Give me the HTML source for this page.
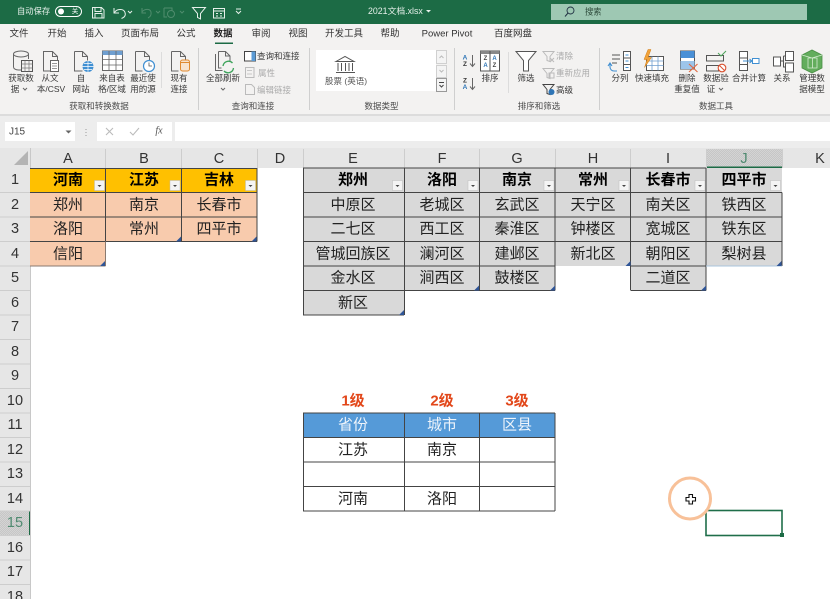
<!DOCTYPE html>
<html><head><meta charset="utf-8"><style>
html,body{margin:0;padding:0;background:#fff;width:830px;height:599px;overflow:hidden}
svg{display:block}
text{font-family:"Liberation Sans","Noto Sans CJK SC",sans-serif;dominant-baseline:central}
.m{text-anchor:middle}
.t{font-size:9.5px;fill:#333}
.r{font-size:8.5px;fill:#3a3a3a}
.g{font-size:8.5px;fill:#aaa}
.gl{font-size:8.5px;fill:#4a4a4a;text-anchor:middle}
.h{font-size:14.5px;fill:#333;text-anchor:middle}
.c{font-size:15px;fill:#222;text-anchor:middle}
.b{font-size:15px;fill:#000;text-anchor:middle;font-weight:700}
.o{font-size:15px;fill:#e2471a;text-anchor:middle;font-weight:700}
.w{font-size:15px;fill:#eef4fb;text-anchor:middle}
.l{stroke:#444;stroke-width:1;fill:none}
.s{stroke:#666;stroke-width:1;fill:none}
.sq{stroke:#d4d4d4;stroke-width:1}
.fb{fill:#f4f4f4;stroke:#bbb;stroke-width:.5}
.tri{fill:#2f5597}
</style></head><body>
<svg width="830" height="599" viewBox="0 0 830 599" xmlns="http://www.w3.org/2000/svg">
<defs>
<pattern id="hat" width="2" height="2" patternUnits="userSpaceOnUse"><rect width="2" height="2" fill="#c6c6c6"/><rect width="1" height="1" fill="#d4d4d4"/><rect x="1" y="1" width="1" height="1" fill="#d4d4d4"/></pattern>
</defs>
<rect width="830" height="599" fill="#fff"/>
<!-- title bar -->
<rect width="830" height="24" fill="#1c6b45"/>
<text x="17" y="11" style="font-size:8.3px;fill:#e6f0ea">自动保存</text>
<rect x="55.500" y="6.500" width="26" height="10" rx="5" fill="none" stroke="#fff"/>
<circle cx="61" cy="11.500" r="3" fill="#fff"/>
<text x="75" y="11.500" class="m" style="font-size:6.500px;fill:#fff">关</text>
<g fill="none" stroke="#e6f0ea" stroke-width="1">
<path d="M92.500 7.500h9l2.500 2.500v8h-11.500z M95 7.500v4h6v-4 M95 18v-4.500h7V18"/>
<path d="M114 8v5h5 M114.500 12.500c2-3.500 9-4.500 10.500 0 1 3-1 5-3.500 6"/>
<path d="M128 11l2 2 2-2" />
<path d="M142 8v5h4 M142 12c2-3 8-4 9 0 .5 3-1 5-3 6" stroke="#4f8c6d"/>
<path d="M156 11l2 2 2-2" stroke="#4f8c6d"/>
<path d="M164 8h8v3 M164 8v9h3" stroke="#4f8c6d"/><circle cx="171" cy="14" r="3.500" stroke="#4f8c6d"/>
<path d="M180 11l2 2 2-2" stroke="#4f8c6d"/>
<path d="M192.500 7.500h13l-5 6v5.500l-3-1.500v-4z"/>
<rect x="213.500" y="8.500" width="11" height="9.500"/><path d="M213.500 11h11 M216 13.500h2 M220 13.500h2 M216 16h2 M220 16h2"/>
<path d="M236 9h5 M236 11l2.500 2.500 2.500-2.500"/>
</g>
<text x="368" y="11" style="font-size:8.800px;fill:#e6f0ea">2021文档.xlsx</text>
<path d="M426 10h5l-2.500 2.500z" fill="#e6f0ea"/>
<rect x="551" y="4" width="256" height="16" fill="#9ec8b3"/>
<circle cx="570.500" cy="10.500" r="3.500" fill="none" stroke="#234" stroke-width=".9"/><path d="M568 13l-3 3.500" stroke="#234" stroke-width="1"/>
<text x="585" y="11.500" style="font-size:8.300px;fill:#2d4a3b">搜索</text>
<!-- ribbon -->
<rect y="24" width="830" height="90" fill="#f3f2f1"/>
<text x="19" y="34" class="t m">文件</text><text x="57" y="34" class="t m">开始</text><text x="94" y="34" class="t m">插入</text><text x="140" y="34" class="t m">页面布局</text><text x="186" y="34" class="t m">公式</text>
<text x="223" y="34" class="t m" style="font-weight:700;fill:#222">数据</text><rect x="215" y="42.500" width="18" height="1.500" fill="#1c6b45"/>
<text x="261" y="34" class="t m">审阅</text><text x="298" y="34" class="t m">视图</text><text x="344" y="34" class="t m">开发工具</text><text x="390" y="34" class="t m">帮助</text><text x="447" y="34" class="t m">Power Pivot</text><text x="513" y="34" class="t m">百度网盘</text>
<!-- separators -->
<g class="sq">
<path d="M198.500 48v62 M309.500 48v62 M454.500 48v62 M599.500 48v62" stroke="#cfcfcf"/>
<path d="M161.500 52v36 M508.500 52v41" stroke="#dcdcdc"/>
</g>
<!-- group 1 icons -->
<g class="s">
<path d="M13.500 54v13c0 1.500 2 3 5 3h3 M28.500 54v5"/><ellipse cx="21" cy="54" rx="7.500" ry="3"/>
<path d="M43.500 51.500h9l5 5v14.500h-14z M52.500 51.500v5h5"/>
<path d="M74.500 51.500h8l5 5v4 M82.500 51.500v5h5 M74.500 51.500v19.500h8"/>
<path d="M135.500 51.500h9l5 5v4 M144.500 51.500v5h5 M135.500 51.500v19.500h7"/>
<path d="M171.500 51.500h9l5 5v3 M180.500 51.500v5h5 M171.500 51.500v19.500h7"/>
</g>
<rect x="21.500" y="60.500" width="11" height="11" fill="#f3f2f1" stroke="#555"/><path d="M21.500 64h11 M21.500 68h11 M25 60.500v11 M29 60.500v11" stroke="#777" stroke-width=".7"/>
<rect x="50.500" y="60.500" width="8" height="11" fill="#fff" stroke="#666"/><path d="M52 63.500h5 M52 66h5 M52 68.500h5" stroke="#777" stroke-width=".7"/>
<circle cx="88" cy="66.500" r="5.500" fill="#3f8fd2"/><path d="M82.500 66.500h11 M88 61v11 M84 63.500h8 M84 69.500h8" stroke="#fff" stroke-width=".7"/>
<rect x="102.500" y="51" width="20" height="19.500" fill="#fff" stroke="#666"/><rect x="102.500" y="51" width="20" height="4" fill="#6f9fd0"/><path d="M102.500 59.500h20 M102.500 65h20 M109 51v19.500 M116 51v19.500" stroke="#666" stroke-width=".8" fill="none"/>
<circle cx="149" cy="66" r="5.500" fill="#fff" stroke="#3f8fd2" stroke-width="1.200"/><path d="M149 62.500v3.500h3" stroke="#555" fill="none" stroke-width=".8"/>
<rect x="180.500" y="60" width="9" height="11" rx="2" fill="#f7e3cf" stroke="#e08a30"/><path d="M180.500 62.500h9" stroke="#e08a30"/>
<!-- labels 1 -->
<text x="21" y="78" class="r m">获取数</text><text x="15" y="89" class="r m">据</text><path d="M23 88l2 2 2-2" class="s"/>
<text x="50" y="78" class="r m">从文</text><text x="51" y="89" class="r m">本/CSV</text>
<text x="81" y="78" class="r m">自</text><text x="81" y="89" class="r m">网站</text>
<text x="112" y="78" class="r m">来自表</text><text x="112" y="89" class="r m">格/区域</text>
<text x="143" y="78" class="r m">最近使</text><text x="143" y="89" class="r m">用的源</text>
<text x="179" y="78" class="r m">现有</text><text x="179" y="89" class="r m">连接</text>
<text x="99" y="106" class="gl">获取和转换数据</text>
<!-- group 2 -->
<path d="M215.500 54v16.500h7 M218.500 51.500h7l4.500 4.500v5 M225.500 51.500v4.500h4.500 M218.500 51.500v16.500h3" class="s"/>
<path d="M223 66a5.500 5.500 0 0 1 9.500-3 M233.500 68a5.500 5.500 0 0 1-9.500 3" fill="none" stroke="#3ca35a" stroke-width="1.300"/>
<text x="223" y="78" class="r m">全部刷新</text><path d="M221 88l2 2 2-2" class="s"/>
<rect x="244.500" y="51.500" width="11" height="9.500" fill="#fff" stroke="#444"/><rect x="251.500" y="51.500" width="4" height="9.500" fill="#5b9bd5"/>
<text x="257" y="56" class="r">查询和连接</text>
<rect x="245.500" y="67.500" width="8.500" height="10" fill="none" stroke="#bbb"/><path d="M247 70.500h5 M247 74h5" stroke="#bbb" stroke-width=".7"/>
<text x="258" y="73" class="g">属性</text>
<path d="M245.500 84.500h6l3 3v7h-9z" fill="none" stroke="#bbb"/>
<text x="257" y="90" class="g">编辑链接</text>
<text x="253" y="106" class="gl">查询和连接</text>
<!-- data types -->
<rect x="316" y="50" width="120" height="41" fill="#fff"/>
<rect x="436.500" y="50.500" width="10" height="13" fill="#f4f4f4" stroke="#d0d0d0"/>
<rect x="436.500" y="65.500" width="10" height="12" fill="#f4f4f4" stroke="#d0d0d0"/>
<rect x="436.500" y="78.500" width="10" height="13" fill="#f4f4f4" stroke="#999"/>
<path d="M439.500 58l2-2 2 2 M439.500 70l2 2 2-2" stroke="#bbb" fill="none"/><path d="M439 82.500h5 M439.500 85l2 2 2-2" stroke="#444" fill="none"/>
<path d="M336 61.500l9-5 9 5z M336 72.500h19 M338 63v8 M341.500 63v8 M345.500 63v8 M349 63v8 M352.500 63v8" fill="none" stroke="#555" stroke-width="1"/>
<text x="325" y="81" style="font-size:8.500px;fill:#555">股票 (英语)</text>
<text x="381.500" y="106" class="gl">数据类型</text>
<!-- sort -->
<text x="465" y="58" style="font-size:6.500px;font-weight:700;fill:#2e75b6" class="m">A</text><text x="465" y="64.500" style="font-size:6.500px;font-weight:700;fill:#333" class="m">Z</text>
<text x="465" y="81" style="font-size:6.500px;font-weight:700;fill:#333" class="m">Z</text><text x="465" y="87.500" style="font-size:6.500px;font-weight:700;fill:#2e75b6" class="m">A</text>
<path d="M472.500 55v11 M470 63.500l2.500 3 2.500-3 M472.500 78v11 M470 86.500l2.500 3 2.500-3" class="s"/>
<rect x="480.500" y="51" width="19" height="20" fill="#fff" stroke="#555"/><rect x="480.500" y="51" width="19" height="3" fill="#888"/><path d="M490 51v20" stroke="#555"/>
<text x="485.500" y="59" style="font-size:6px;font-weight:700;fill:#444" class="m">Z</text><text x="485.500" y="66" style="font-size:6px;font-weight:700;fill:#2e75b6" class="m">A</text>
<text x="494.500" y="59" style="font-size:6px;font-weight:700;fill:#2e75b6" class="m">A</text><text x="494.500" y="66" style="font-size:6px;font-weight:700;fill:#444" class="m">Z</text>
<text x="490" y="78" class="r m">排序</text>
<path d="M516 51.500h20l-7.500 9v10.500h-5v-10.500z" fill="#fff" stroke="#555"/>
<text x="526" y="78" class="r m">筛选</text>
<path d="M543 51.500h11l-4 5v5l-3-1v-4z" fill="none" stroke="#bbb"/><path d="M550 58l4 4 M554 58l-4 4" stroke="#bbb"/>
<text x="556" y="56" class="g">清除</text>
<path d="M543 68.500h11l-4 5v5l-3-1v-4z" fill="none" stroke="#bbb"/><rect x="549" y="73" width="5" height="5" fill="none" stroke="#bbb"/>
<text x="556" y="73" class="g">重新应用</text>
<path d="M543 84.500h11l-4 5v5l-3-1v-4z" fill="none" stroke="#444"/><circle cx="551.500" cy="92" r="3" fill="#2e75b6"/>
<text x="556" y="90" class="r">高级</text>
<text x="539" y="106" class="gl">排序和筛选</text>
<!-- data tools -->
<path d="M612 55h8 M612 59h8 M612 63h5" stroke="#555" fill="none"/><path d="M610 63v4a4 4 0 0 0 4 4h3 M608 66l2-3 2 3" stroke="#3f8fd2" fill="none" stroke-width="1.100"/>
<rect x="623.500" y="51.500" width="7" height="19" fill="#fff" stroke="#555"/><path d="M623.500 58h7 M623.500 64.500h7" stroke="#555"/><path d="M625.500 55h3 M625.500 61h3 M625.500 67.500h3" stroke="#3f8fd2"/>
<rect x="646.500" y="56.500" width="17" height="14" fill="#fff" stroke="#555"/><path d="M646.500 61h17 M646.500 65.500h17 M652 56.500v14 M658 56.500v14" stroke="#6f9fd0" stroke-width=".8"/>
<path d="M648 49.500l-4 10h3l-2.500 8 7-10h-3.500l3-8z" fill="#f2a33a" stroke="#d07f1a" stroke-width=".5"/>
<rect x="680.500" y="51" width="14" height="18" fill="#fff" stroke="#555"/><rect x="680.500" y="51" width="14" height="7" fill="#4a90d6"/><rect x="680.500" y="61" width="14" height="8" fill="#9dc5ea"/>
<path d="M689 64l8.500 8 M697.500 64l-8.500 8" stroke="#e2673f" stroke-width="1.100"/>
<rect x="706.500" y="55.500" width="17" height="5.500" fill="none" stroke="#555"/><rect x="706.500" y="65.500" width="12" height="5.500" fill="none" stroke="#555"/>
<path d="M718 53l3 3 5-5" stroke="#4ca35a" fill="none"/>
<circle cx="722" cy="68" r="3.800" fill="#fff" stroke="#d9502e" stroke-width="1.100"/><path d="M719.500 65.500l5 5" stroke="#d9502e"/>
<rect x="739.500" y="51.500" width="8" height="19" fill="#fff" stroke="#555"/><path d="M739.500 58h8 M739.500 64.500h8" stroke="#555"/>
<path d="M743 61h9 M749.500 59l2.500 2-2.500 2" stroke="#3f8fd2" fill="none"/><rect x="752.500" y="58.500" width="6.500" height="5" fill="#fff" stroke="#3f8fd2"/>
<rect x="773.500" y="57" width="7" height="9" fill="#fff" stroke="#555"/><rect x="785.500" y="51.500" width="8" height="9" fill="#fff" stroke="#555"/><rect x="785.500" y="63" width="8" height="9" fill="#fff" stroke="#555"/><path d="M780.500 61h3 M783.500 56v11h2 M783.500 56h2" stroke="#555" fill="none"/>
<path d="M802 55l10-5 10 5v13l-10 5-10-5z" fill="#63ad5d" stroke="#4a8f46" stroke-width=".8"/><path d="M808 58h9v10h-9z M812.500 58v10 M802 55l10 3 10-3" stroke="#d6ecd2" fill="none" stroke-width=".8"/>
<text x="620" y="78" class="r m">分列</text><text x="652" y="78" class="r m">快速填充</text>
<text x="687" y="78" class="r m">删除</text><text x="687" y="89" class="r m">重复值</text>
<text x="716" y="78" class="r m">数据验</text><text x="711" y="89" class="r m">证</text><path d="M719 88l2 2 2-2" class="s"/>
<text x="749" y="78" class="r m">合并计算</text><text x="782" y="78" class="r m">关系</text>
<text x="812" y="78" class="r m">管理数</text><text x="812" y="89" class="r m">据模型</text>
<text x="716" y="106" class="gl">数据工具</text>
<!-- formula band -->
<rect y="114" width="830" height="34" fill="#ededed"/>
<rect y="114" width="830" height="2" fill="#dcdcdc"/>
<rect x="5" y="122" width="70" height="19" fill="#fff"/>
<text x="9" y="132" style="font-size:10px;fill:#444">J15</text>
<path d="M65.500 130.500h6l-3 3z" fill="#666"/>
<path d="M86 129v1 M86 132v1 M86 135v1" stroke="#999"/>
<rect x="97" y="122" width="75" height="19" fill="#fff"/>
<path d="M106 128l7 7 M113 128l-7 7" stroke="#bbb" stroke-width="1.100"/>
<path d="M130 132l3 3 6-7" stroke="#bbb" stroke-width="1.100" fill="none"/>
<text x="159" y="131" class="m" style="font-size:10px;font-style:italic;fill:#555;font-family:'Liberation Serif',serif">fx</text>
<rect x="175" y="122" width="655" height="19" fill="#fff"/>
<!-- headers -->
<rect y="148" width="830" height="20" fill="#e6e6e6"/>
<rect y="148" width="30" height="451" fill="#e6e6e6"/>
<path d="M14 165h14v-14z" fill="#b4b4b4"/>
<rect x="706" y="149" width="76" height="18" fill="url(#hat)"/>
<rect x="706" y="166.500" width="76" height="1.500" fill="#1c6b45"/>
<rect y="511" width="30" height="24.500" fill="url(#hat)"/>
<rect x="29" y="511" width="1.500" height="24.500" fill="#1c6b45"/>
<g stroke="#cdcdcd" stroke-width="1">
<path d="M30.500 149v19 M105.500 149v19 M181.500 149v19 M257.500 149v19 M303.500 149v19 M404.500 149v19 M479.500 149v19 M555.500 149v19 M630.500 149v19 M706.500 149v19 M782.500 149v19"/>
<path d="M30.500 148v451" stroke="#c8c8c8"/>
<path d="M0 192.500h30 M0 217h30 M0 241.500h30 M0 266h30 M0 290.500h30 M0 315h30 M0 339.500h30 M0 364h30 M0 388.500h30 M0 413h30 M0 437.500h30 M0 462h30 M0 486.500h30 M0 511h30 M0 535.500h30 M0 560h30 M0 584.500h30"/>
</g>
<g class="h">
<text x="68" y="159">A</text><text x="144" y="159">B</text><text x="219" y="159">C</text><text x="280" y="159">D</text><text x="353" y="159">E</text><text x="442" y="159">F</text><text x="517" y="159">G</text><text x="593" y="159">H</text><text x="668" y="159">I</text><text x="744" y="159" style="fill:#4f8a70">J</text><text x="820" y="159">K</text>
<text x="15" y="180">1</text><text x="15" y="205">2</text><text x="15" y="229">3</text><text x="15" y="254">4</text><text x="15" y="278">5</text><text x="15" y="303">6</text><text x="15" y="327">7</text><text x="15" y="352">8</text><text x="15" y="376">9</text><text x="15" y="401">10</text><text x="15" y="425">11</text><text x="15" y="450">12</text><text x="15" y="474">13</text><text x="15" y="499">14</text><text x="15" y="523" style="fill:#4f8a70">15</text><text x="15" y="548">16</text><text x="15" y="572">17</text><text x="15" y="597">18</text>
</g>
<!-- table 1 fills -->
<rect x="30" y="168" width="227" height="24.500" fill="#ffc000"/>
<rect x="30" y="192.500" width="227" height="49" fill="#f8cbad"/>
<rect x="30" y="241.500" width="75.500" height="24.500" fill="#f8cbad"/>
<path class="l" d="M30 168.500h227 M30 192.500h227 M30 217h227 M30 241.500h227 M105.500 168v73.500 M181.500 168v73.500 M257 168v73.500"/>
<path d="M105.500 241.500v24.500 M30 266h75.500" stroke="#8a7a70" fill="none"/>
<text x="68" y="180" class="b">河南</text><text x="144" y="180" class="b">江苏</text><text x="219" y="180" class="b">吉林</text>
<text x="68" y="205" class="c">郑州</text><text x="144" y="205" class="c">南京</text><text x="219" y="205" class="c">长春市</text>
<text x="68" y="229" class="c">洛阳</text><text x="144" y="229" class="c">常州</text><text x="219" y="229" class="c">四平市</text>
<text x="68" y="254" class="c">信阳</text>
<!-- table 2 fills -->
<rect x="303" y="168" width="479" height="98" fill="#d9d9d9"/>
<rect x="303" y="266" width="252" height="24.500" fill="#d9d9d9"/>
<rect x="631" y="266" width="75" height="24.500" fill="#d9d9d9"/>
<rect x="303" y="290.500" width="101" height="24.500" fill="#d9d9d9"/>
<path class="l" d="M303 168h403 M303 192.500h479 M303 217h479 M303 241.500h479 M303 266h252 M631 266h75 M303 290.500h252 M631 290.500h75 M303 315h101 M303.500 168v147 M404.500 168v147 M479.500 168v122.500 M555 168v122.500 M630.500 168v122.500 M706 168v122.500 M782 192.500v73.500"/>
<path d="M706 266h76" stroke="#a9c4dc" fill="none"/>
<g>
<text x="353" y="180" class="b">郑州</text><text x="442" y="180" class="b">洛阳</text><text x="517" y="180" class="b">南京</text><text x="593" y="180" class="b">常州</text><text x="668" y="180" class="b">长春市</text><text x="744" y="180" class="b">四平市</text>
<text x="353" y="205" class="c">中原区</text><text x="442" y="205" class="c">老城区</text><text x="517" y="205" class="c">玄武区</text><text x="593" y="205" class="c">天宁区</text><text x="668" y="205" class="c">南关区</text><text x="744" y="205" class="c">铁西区</text>
<text x="353" y="229" class="c">二七区</text><text x="442" y="229" class="c">西工区</text><text x="517" y="229" class="c">秦淮区</text><text x="593" y="229" class="c">钟楼区</text><text x="668" y="229" class="c">宽城区</text><text x="744" y="229" class="c">铁东区</text>
<text x="353" y="254" class="c">管城回族区</text><text x="442" y="254" class="c">澜河区</text><text x="517" y="254" class="c">建邺区</text><text x="593" y="254" class="c">新北区</text><text x="668" y="254" class="c">朝阳区</text><text x="744" y="254" class="c">梨树县</text>
<text x="353" y="278" class="c">金水区</text><text x="442" y="278" class="c">涧西区</text><text x="517" y="278" class="c">鼓楼区</text><text x="668" y="278" class="c">二道区</text>
<text x="353" y="303" class="c">新区</text>
</g>
<!-- filter buttons -->
<g>
<rect class="fb" x="94.500" y="180.500" width="10" height="10"/><rect class="fb" x="170" y="180.500" width="10" height="10"/><rect class="fb" x="245.500" y="180.500" width="10" height="10"/>
<rect class="fb" x="392.500" y="180.500" width="10" height="10"/><rect class="fb" x="468" y="180.500" width="10" height="10"/><rect class="fb" x="544" y="180.500" width="10" height="10"/><rect class="fb" x="619" y="180.500" width="10" height="10"/><rect class="fb" x="695" y="180.500" width="10" height="10"/><rect class="fb" x="770.500" y="180.500" width="10" height="10"/>
</g>
<g fill="#444">
<path d="M97.500 185h4l-2 2z M173 185h4l-2 2z M248.500 185h4l-2 2z M395.500 185h4l-2 2z M471 185h4l-2 2z M547 185h4l-2 2z M622 185h4l-2 2z M698 185h4l-2 2z M773.500 185h4l-2 2z"/>
</g>
<!-- corner triangles -->
<g class="tri">
<path d="M105 261v5h-5z M181 236.500v5h-5z M256.500 236.500v5h-5z M404 310v5h-5z M479 285.500v5h-5z M555 285.500v5h-5z M630.500 261v5h-5z M706 285.500v5h-5z M781.500 261v5h-5z"/>
</g>
<!-- level table -->
<text x="353" y="401" class="o">1级</text><text x="442" y="401" class="o">2级</text><text x="517" y="401" class="o">3级</text>
<rect x="303" y="413" width="252" height="24.500" fill="#559ad8"/>
<path class="l" d="M303 413h252 M303 437.500h252 M303 462h252 M303 486.500h252 M303 511h252 M303.500 413v98 M404.500 413v98 M479.500 413v98 M555 413v98"/>
<text x="353" y="425" class="w">省份</text><text x="442" y="425" class="w">城市</text><text x="517" y="425" class="w">区县</text>
<text x="353" y="450" class="c">江苏</text><text x="442" y="450" class="c">南京</text>
<text x="353" y="499" class="c">河南</text><text x="442" y="499" class="c">洛阳</text>
<!-- selection + cursor -->
<rect x="706" y="510.500" width="76" height="25" fill="none" stroke="#1f6e4a" stroke-width="1.600"/>
<rect x="780" y="533" width="4" height="4" fill="#1c6b45"/>
<circle cx="690" cy="498.500" r="20.500" fill="none" stroke="#f8c199" stroke-width="3"/>
<path d="M689 494.500h3.500v3h3v3.500h-3v3h-3.500v-3h-3v-3.500h3z" fill="#fff" stroke="#111" stroke-width="1.100"/>
</svg>
</body></html>
